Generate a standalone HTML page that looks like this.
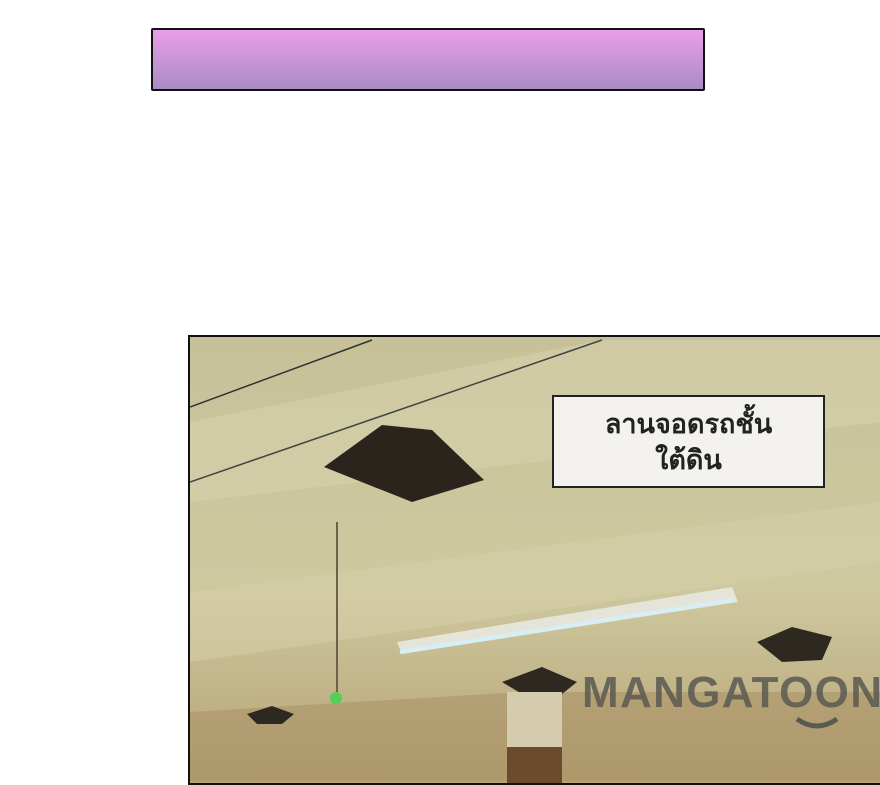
<!DOCTYPE html>
<html><head><meta charset="utf-8"><style>
body{margin:0;width:880px;height:779px;background:#fff;overflow:hidden;position:relative;font-family:"Liberation Sans","DejaVu Sans",sans-serif}
.bar{position:absolute;left:151px;top:28px;width:550px;height:59px;border:2px solid #111;border-radius:2px;background:linear-gradient(#e99ee8,#a98cc6)}
.panel{position:absolute;left:188px;top:335px;width:700px;height:450px;border:2px solid #111;box-sizing:border-box;overflow:hidden}
.cap{position:absolute;left:552px;top:395px;width:273px;height:93px;border:2px solid #222;background:#f3f2ee;box-sizing:border-box;text-align:center;font-weight:bold;font-size:27px;line-height:36px;padding-top:9px;color:#222}
</style></head><body>
<div class="bar"></div>
<div class="panel">
<svg width="700" height="450" viewBox="188 335 700 450">
<defs>
<linearGradient id="bg" x1="0" y1="0" x2="0" y2="1">
<stop offset="0" stop-color="#c6c198"/><stop offset="0.55" stop-color="#cfc9a0"/><stop offset="1" stop-color="#b5a273"/></linearGradient>
</defs>
<rect x="188" y="335" width="700" height="450" fill="url(#bg)"/>
<polygon points="188,420 600,338 880,338 880,420 188,500" fill="#d8d3b0" opacity=".5"/>
<polygon points="188,590 880,500 880,560 188,660" fill="#d6cfaa" opacity=".5"/>
<polygon points="188,710 520,690 880,690 880,779 188,779" fill="#a88f64" opacity=".55"/>
<line x1="188" y1="405" x2="370" y2="338" stroke="#333" stroke-width="1.5"/>
<line x1="188" y1="480" x2="600" y2="338" stroke="#444" stroke-width="1.5"/>
<polygon points="322,465 380,423 430,428 482,478 410,500" fill="#2a241c"/>
<polygon points="755,640 790,625 830,635 820,658 780,660" fill="#2e2920"/>
<polygon points="500,680 540,665 575,680 560,692 520,692" fill="#2e2920"/>
<polygon points="245,712 270,704 292,712 280,722 255,722" fill="#2e2920"/>
<line x1="335" y1="520" x2="335" y2="690" stroke="#6d6248" stroke-width="2"/>
<circle cx="334" cy="696" r="6" fill="#52d05a"/>
<polygon points="395,640 730,585 736,600 400,652" fill="#e4e4d8"/>
<line x1="398" y1="650" x2="732" y2="598" stroke="#d6eef5" stroke-width="4"/>
<rect x="505" y="690" width="55" height="60" fill="#d4ccac"/>
<rect x="505" y="745" width="55" height="40" fill="#6b4a2e"/>
<text x="580" y="705" font-family="Liberation Sans,sans-serif" font-weight="bold" font-size="44" fill="#5a5a52" opacity=".85" textLength="300">MANGATOON</text>
<path d="M795 717 q20 14 40 0" stroke="#5a5a52" stroke-width="5" fill="none"/>
</svg>
</div>
<div class="cap">ลานจอดรถชั้น<br>ใต้ดิน</div>
</body></html>
